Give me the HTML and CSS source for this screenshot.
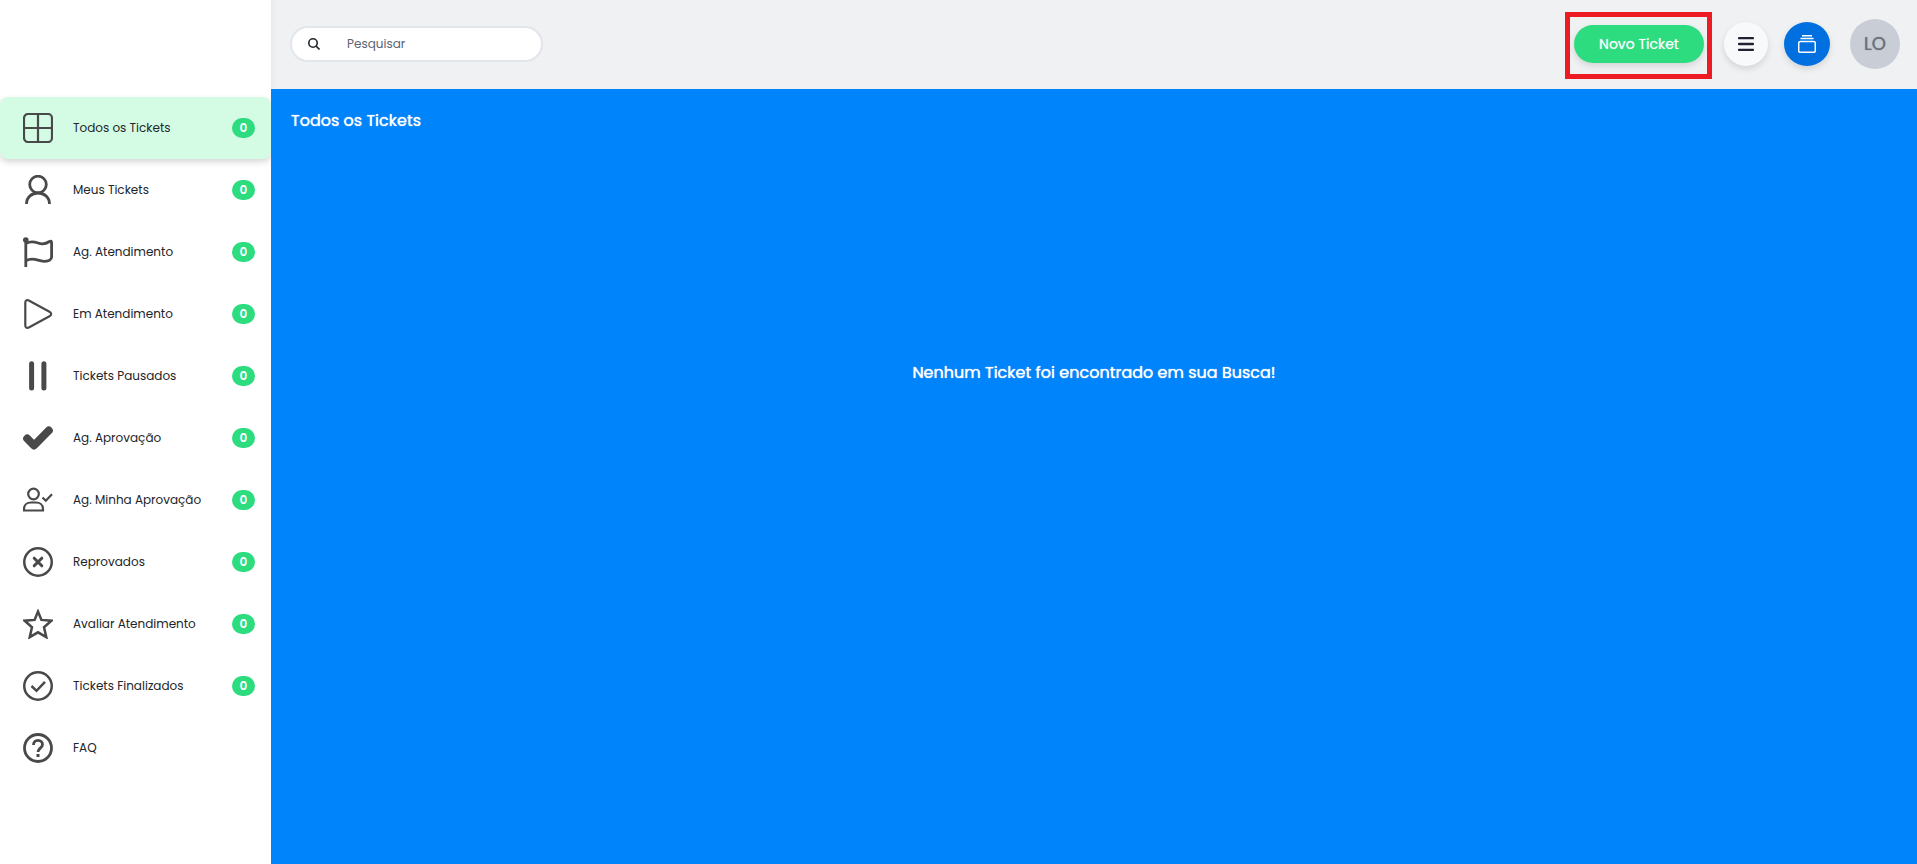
FILE: index.html
```html
<!DOCTYPE html>
<html lang="pt-BR">
<head>
  <meta charset="UTF-8">
  <title>Todos os Tickets</title>
  <meta name="viewport" content="width=device-width, initial-scale=1.0">
  <link rel="stylesheet" href="styles.css">
</head>
<body>
  <div class="app">
    <nav class="sidebar">
      <a href="#" class="item active">
        <svg class="icon" viewBox="0 0 30 30"><rect x="1" y="1" width="28" height="28" rx="4"/><path d="M15 1v28M1 15h28"/></svg>
        <span class="label">Todos os Tickets</span>
        <span class="badge">0</span>
      </a>
      <a href="#" class="item">
        <svg class="icon thick" viewBox="0 0 30 30"><circle cx="15" cy="9.500" r="8.300"/><path d="M3.500 29C3.500 22 9 18 15 18s11.500 4 11.500 11"/></svg>
        <span class="label">Meus Tickets</span>
        <span class="badge">0</span>
      </a>
      <a href="#" class="item">
        <svg class="icon thick" viewBox="0 0 30 30"><circle class="fill" cx="2.800" cy="3" r="2.800"/><path d="M2.800 3v27M3 6.500C7 4 11 4.500 15 6s7 1.500 11.500-1.500C28 3.800 28.600 4 28.600 6v14c0 2-1 2.500-2.100 3.200-4.500 2-7.500 1.300-11.500 0s-8-1.700-12 .5"/></svg>
        <span class="label">Ag. Atendimento</span>
        <span class="badge">0</span>
      </a>
      <a href="#" class="item">
        <svg class="icon" viewBox="0 0 30 30"><path d="M2.300 3.500v23c0 2 1.500 3 3.500 2l20.700-11.300c2.200-1.200 2.200-3.200 0-4.400L5.800 1.500c-2-1-3.500 0-3.500 2z"/></svg>
        <span class="label">Em Atendimento</span>
        <span class="badge">0</span>
      </a>
      <a href="#" class="item">
        <svg class="icon bars" viewBox="0 0 30 30"><path d="M8.600 2.700v24.400M20.900 2.700v24.400"/></svg>
        <span class="label">Tickets Pausados</span>
        <span class="badge">0</span>
      </a>
      <a href="#" class="item">
        <svg class="icon check" viewBox="0 0 30 30"><path d="M4.200 15.500l6.800 7L25.800 7.500"/></svg>
        <span class="label">Ag. Aprovação</span>
        <span class="badge">0</span>
      </a>
      <a href="#" class="item">
        <svg class="icon" viewBox="0 0 30 30"><circle cx="10.500" cy="9" r="5.300"/><path d="M1 25.500v-1.500c0-4.500 3.500-6.500 7-6.500h5c3.500 0 7 2 7 6.500v1.500zM19.500 12.500l3.300 3.200L29 9.200"/></svg>
        <span class="label">Ag. Minha Aprovação</span>
        <span class="badge">0</span>
      </a>
      <a href="#" class="item">
        <svg class="icon ring" viewBox="0 0 30 30"><circle cx="15" cy="15" r="13.750"/><path class="cross" d="M11.200 11.200l7.600 7.600M18.800 11.200l-7.600 7.600"/></svg>
        <span class="label">Reprovados</span>
        <span class="badge">0</span>
      </a>
      <a href="#" class="item">
        <svg class="icon ring" viewBox="0 0 30 30"><path d="M15 2.500l3.400 8.400 10 .8-7.400 6.500 2.300 10L15 23.300l-8.300 4.900 2.300-10-7.400-6.500 10-.8z"/></svg>
        <span class="label">Avaliar Atendimento</span>
        <span class="badge">0</span>
      </a>
      <a href="#" class="item">
        <svg class="icon ring" viewBox="0 0 30 30"><circle cx="15" cy="15" r="13.750"/><path d="M8.500 15l5 4.800 8.500-9"/></svg>
        <span class="label">Tickets Finalizados</span>
        <span class="badge">0</span>
      </a>
      <a href="#" class="item">
        <svg class="icon thick" viewBox="0 0 30 30"><circle cx="15" cy="15" r="13.500"/><path d="M10.500 12c0-3 2-4.700 4.500-4.700s4.500 1.800 4.500 4.200c0 3.500-4.500 3.800-4.500 7.500"/><rect class="fill" x="13.500" y="21" width="3" height="3"/></svg>
        <span class="label">FAQ</span>
      </a>
    </nav>

    <div class="page">
      <header class="topbar">
        <div class="search">
          <label for="search" aria-label="Pesquisar">
            <svg class="lens" viewBox="0 0 12 12"><circle cx="5" cy="5" r="4.200"/><path d="M8 8l3.500 3.500"/></svg>
          </label>
          <input type="text" id="search" placeholder="Pesquisar">
        </div>
        <div class="actions">
          <div class="highlight">
            <button class="new-ticket">Novo Ticket</button>
          </div>
          <button class="round menu" aria-label="Menu">
            <svg viewBox="0 0 16 14" width="16" height="14"><path d="M1 1.200h14M1 7h14M1 12.800h14"/></svg>
          </button>
          <button class="round stack" aria-label="Filas">
            <svg viewBox="0 0 18 18" width="18" height="18"><path d="M4 .8h10M2.500 3.600h13"/><rect x=".7" y="6.500" width="16.600" height="10.800" rx="1.600"/></svg>
          </button>
          <button class="avatar">LO</button>
        </div>
      </header>

      <main class="content">
        <h1>Todos os Tickets</h1>
        <p class="empty">Nenhum Ticket foi encontrado em sua Busca!</p>
      </main>
    </div>
  </div>
</body>
</html>
```
FILE: styles.css
```css
* {
  box-sizing: border-box;
}
body {
  margin: 0;
  font-family: Poppins, Inter, 'Open Sans', sans-serif;
  font-size: 12px;
  color: #212529;
}
button, input {
  font-family: inherit;
}
button {
  border: none;
  padding: 0;
  cursor: pointer;
}
.app {
  display: flex;
  min-height: 100vh;
}

/* sidebar */
.sidebar {
  flex: 0 0 271px;
  padding-top: 97px;
  background: #fff;
}
.item {
  display: flex;
  align-items: center;
  height: 62px;
  padding: 0 16px 0 23px;
  border-radius: 8px;
  color: #212529;
  text-decoration: none;
}
.item.active {
  background: #d4fce5;
  box-shadow: 0 3px 6px rgba(0,0,0,0.16);
}
.label {
  flex: 1;
  margin-left: 20px;
}
.badge {
  width: 23px;
  border-radius: 10px;
  background: #2ddc7f;
  color: #fff;
  font-size: 12px;
  font-weight: 600;
  line-height: 20px;
  text-align: center;
}
.icon {
  width: 30px;
  height: 30px;
  fill: none;
  stroke: #494949;
  stroke-width: 2.2;
}
.icon.ring {
  stroke-width: 2.5;
}
.icon.thick {
  stroke-width: 2.8;
}
.icon.bars {
  stroke-width: 5;
  stroke-linecap: round;
}
.icon.check {
  stroke-width: 8;
  stroke-linecap: round;
  stroke-linejoin: round;
}
.icon .cross {
  stroke-width: 3;
  stroke-linecap: round;
}
.icon .fill {
  fill: #494949;
  stroke: none;
}

/* top bar */
.page {
  flex: 1;
  display: flex;
  flex-direction: column;
}
.topbar {
  display: flex;
  align-items: center;
  justify-content: space-between;
  height: 89px;
  padding: 0 17px 2px 19px;
  background: linear-gradient(to right, #e9eaec, #f0f1f3 6px);
}
.search {
  display: flex;
  align-items: center;
  width: 253px;
  height: 36px;
  padding: 0 16px;
  border: 2px solid #e2e5ea;
  border-radius: 18px;
  background: #fff;
}
.lens {
  display: block;
  width: 12px;
  height: 12px;
  fill: none;
  stroke: #212529;
  stroke-width: 1.6;
}
.search input {
  flex: 1;
  min-width: 0;
  margin-left: 27px;
  padding: 0;
  border: none;
  outline: none;
  font-size: 12px;
  color: #5c6370;
}
.search input::placeholder {
  color: #5c6370;
}
.actions {
  display: flex;
  align-items: center;
}
.highlight {
  position: relative;
  margin-right: 20px;
}
.highlight::after {
  content: '';
  position: absolute;
  top: -13px;
  right: -8px;
  bottom: -16px;
  left: -9px;
  border: 5px solid #ed1c24;
  pointer-events: none;
}
.new-ticket {
  display: block;
  width: 130px;
  height: 38px;
  padding-top: 1px;
  border-radius: 19px;
  background: #2ddc7f;
  color: #fff;
  font-size: 14px;
  text-shadow: 0 0 1px rgba(255,255,255,0.6);
  box-shadow: 0 3px 6px rgba(0,0,0,0.12);
}
.round {
  display: flex;
  align-items: center;
  justify-content: center;
  width: 44px;
  height: 44px;
  border-radius: 50%;
  box-shadow: 0 3px 6px rgba(0,0,0,0.12);
}
.round svg {
  fill: none;
}
.menu {
  margin-right: 16px;
  background: #f8f9fb;
}
.menu svg {
  stroke: #1d2430;
  stroke-width: 2.3;
  stroke-linecap: round;
}
.stack {
  width: 46px;
  margin-right: 20px;
  background: #0070e0;
}
.stack svg {
  stroke: #fff;
  stroke-width: 1.5;
}
.avatar {
  width: 50px;
  height: 50px;
  border-radius: 50%;
  background: #c9ced6;
  color: #6a717d;
  font-size: 18px;
  text-shadow: 0 0 1px #6a717d;
}

/* ticket list */
.content {
  flex: 1;
  padding: 20px;
  background: #0084fb;
  color: #fff;
  text-shadow: 0 0 1px #fff;
}
h1 {
  margin: 0;
  font-size: 16px;
  font-weight: 400;
  line-height: 24px;
}
.empty {
  margin: 228px 0 0;
  font-size: 16px;
  line-height: 24px;
  text-align: center;
}
```
